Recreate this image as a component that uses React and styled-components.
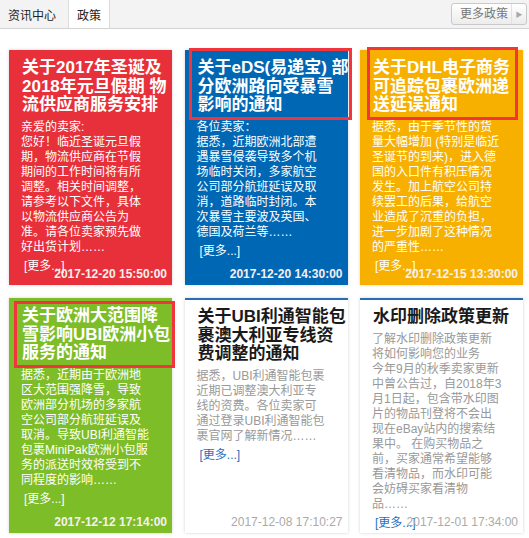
import React from "react";
import styled, { createGlobalStyle, css } from "styled-components";

const GlobalStyle = createGlobalStyle`
  html, body {
    margin: 0;
    padding: 0;
    background: #fff;
  }
  body {
    font-family: "Liberation Sans", "Noto Sans CJK SC", sans-serif;
    font-size: 12px;
    color: #333;
  }
`;

const tones = {
  red: "#e8303a",
  blue: "#0067b4",
  orange: "#f7b000",
  green: "#7dbd27",
  plain: "#fff"
};

const Page = styled.div`
  width: 529px;
  height: 538px;
  overflow: hidden;
`;

const TabBar = styled.div`
  height: 28px;
  display: flex;
  align-items: stretch;
  background: #f3f3f3;
  border-bottom: 1px solid #d3d3d3;
`;

const Tab = styled.div`
  display: flex;
  align-items: center;
  padding: ${p => (p.$active ? "0 8px" : "0 12px 0 8px")};
  font-size: 12px;
  color: #222;
  ${p =>
    p.$active &&
    css`
      background: #fff;
      border-left: 1px solid #dcdcdc;
      border-right: 1px solid #dcdcdc;
    `}
`;

const MoreButton = styled.div`
  margin: 3px 2px 0 auto;
  height: 20px;
  display: flex;
  align-items: center;
  border: 1px solid #c9c9c9;
  border-radius: 3px;
  background: linear-gradient(#ffffff, #ececec);
  color: #777;
  font-size: 12px;
`;

const MoreLabel = styled.span`
  padding: 0 3px 0 8px;
  border-right: 1px solid #e2e2e2;
  line-height: 20px;
`;

const MoreArrow = styled.span`
  width: 14px;
  display: flex;
  justify-content: center;
  color: #aaa;
  font-size: 7px;
`;

const Grid = styled.div`
  display: grid;
  grid-template-columns: repeat(3, 163px);
  grid-auto-rows: 235px;
  column-gap: 12.5px;
  row-gap: 13px;
  padding: 21px 0 0 9px;
`;

const Card = styled.div`
  position: relative;
  box-sizing: border-box;
  padding: 9px 0 0 12px;
  background: ${p => tones[p.$tone]};
  color: ${p => (p.$tone === "plain" ? "#999" : "#fff")};
  box-shadow: 0 0 3px rgba(0, 0, 0, 0.18);
  ${p =>
    p.$tone === "plain" &&
    css`
      border-top: 2px solid #2a6db3;
      padding-top: 8px;
    `}
`;

const Title = styled.h3`
  margin: 0 0 0 1px;
  width: 152px;
  font-size: 17px;
  line-height: 18.5px;
  font-weight: bold;
  color: ${p => (p.$tone === "plain" ? "#1a1a1a" : "#fff")};
`;

const Body = styled.div`
  width: 130px;
  margin-top: 5px;
  font-size: 12px;
  line-height: 15px;
`;

const MoreLink = styled.a`
  display: block;
  margin: 4px 0 0 3px;
  font-size: 12px;
  line-height: 15px;
  color: ${p => (p.$tone === "plain" ? "#1f6fbf" : "#fff")};
  text-decoration: none;
`;

const Stamp = styled.span`
  position: absolute;
  right: 5px;
  bottom: 5px;
  font-size: 12px;
  line-height: 12px;
  font-weight: ${p => (p.$tone === "plain" ? "normal" : "bold")};
  color: ${p => (p.$tone === "plain" ? "#aaa" : "#f6f0f0")};
`;

const Highlight = styled.div`
  position: absolute;
  left: ${p => p.$box.left}px;
  top: ${p => p.$box.top}px;
  width: ${p => p.$box.width}px;
  height: ${p => p.$box.height}px;
  box-sizing: border-box;
  border: 3px solid #f2353d;
  pointer-events: none;
`;

const notices = [
  {
    tone: "red",
    title: "关于2017年圣诞及2018年元旦假期 物流供应商服务安排",
    body: [
      "亲爱的卖家:",
      "您好！临近圣诞元旦假期，物流供应商在节假期间的工作时间将有所调整。相关时间调整，请参考以下文件，具体以物流供应商公告为准。请各位卖家预先做好出货计划……"
    ],
    date: "2017-12-20 15:50:00"
  },
  {
    tone: "blue",
    title: "关于eDS(易递宝) 部分欧洲路向受暴雪影响的通知",
    body: [
      "各位卖家：",
      "据悉，近期欧洲北部遭遇暴雪侵袭导致多个机场临时关闭，多家航空公司部分航班延误及取消，道路临时封闭。本次暴雪主要波及英国、德国及荷兰等……"
    ],
    date: "2017-12-20 14:30:00",
    mark: { left: 4, top: -2, width: 163, height: 72 }
  },
  {
    tone: "orange",
    title: "关于DHL电子商务可追踪包裹欧洲递送延误通知",
    body: [
      "据悉，由于季节性的货量大幅增加 (特别是临近圣诞节的到来)，进入德国的入口件有积压情况发生。加上航空公司持续罢工的后果，给航空业造成了沉重的负担，进一步加剧了这种情况的严重性……"
    ],
    date: "2017-12-15 13:30:00",
    mark: { left: 7, top: -3, width: 151, height: 73 }
  },
  {
    tone: "green",
    title: "关于欧洲大范围降雪影响UBI欧洲小包服务的通知",
    body: [
      "据悉，近期由于欧洲地区大范围强降雪，导致欧洲部分机场的多家航空公司部分航班延误及取消。导致UBI利通智能包裹MiniPak欧洲小包服务的派送时效将受到不同程度的影响……"
    ],
    date: "2017-12-12 17:14:00",
    mark: { left: 5, top: 3, width: 161, height: 67 }
  },
  {
    tone: "plain",
    title: "关于UBI利通智能包裹澳大利亚专线资费调整的通知",
    body: [
      "据悉，UBI利通智能包裹近期已调整澳大利亚专线的资费。各位卖家可通过登录UBI利通智能包裹官网了解新情况……"
    ],
    date: "2017-12-08 17:10:27"
  },
  {
    tone: "plain",
    title: "水印删除政策更新",
    body: [
      "了解水印删除政策更新将如何影响您的业务",
      "今年9月的秋季卖家更新中曾公告过，自2018年3月1日起，包含带水印图片的物品刊登将不会出现在eBay站内的搜索结果中。 在购买物品之前，买家通常希望能够看清物品，而水印可能会妨碍买家看清物品……"
    ],
    date: "2017-12-01 17:34:00"
  }
];

function NoticeCard({ notice }) {
  const { tone, title, body, date, mark } = notice;
  return (
    <Card $tone={tone}>
      <Title $tone={tone}>{title}</Title>
      <Body>
        {body.map((line, i) => (
          <div key={i}>{line}</div>
        ))}
      </Body>
      <MoreLink href="#" $tone={tone}>
        [更多...]
      </MoreLink>
      <Stamp $tone={tone}>{date}</Stamp>
      {mark && <Highlight $box={mark} />}
    </Card>
  );
}

export default function App() {
  return (
    <Page>
      <GlobalStyle />
      <TabBar>
        <Tab>资讯中心</Tab>
        <Tab $active>政策</Tab>
        <MoreButton>
          <MoreLabel>更多政策</MoreLabel>
          <MoreArrow>▶</MoreArrow>
        </MoreButton>
      </TabBar>
      <Grid>
        {notices.map((n, i) => (
          <NoticeCard key={i} notice={n} />
        ))}
      </Grid>
    </Page>
  );
}
